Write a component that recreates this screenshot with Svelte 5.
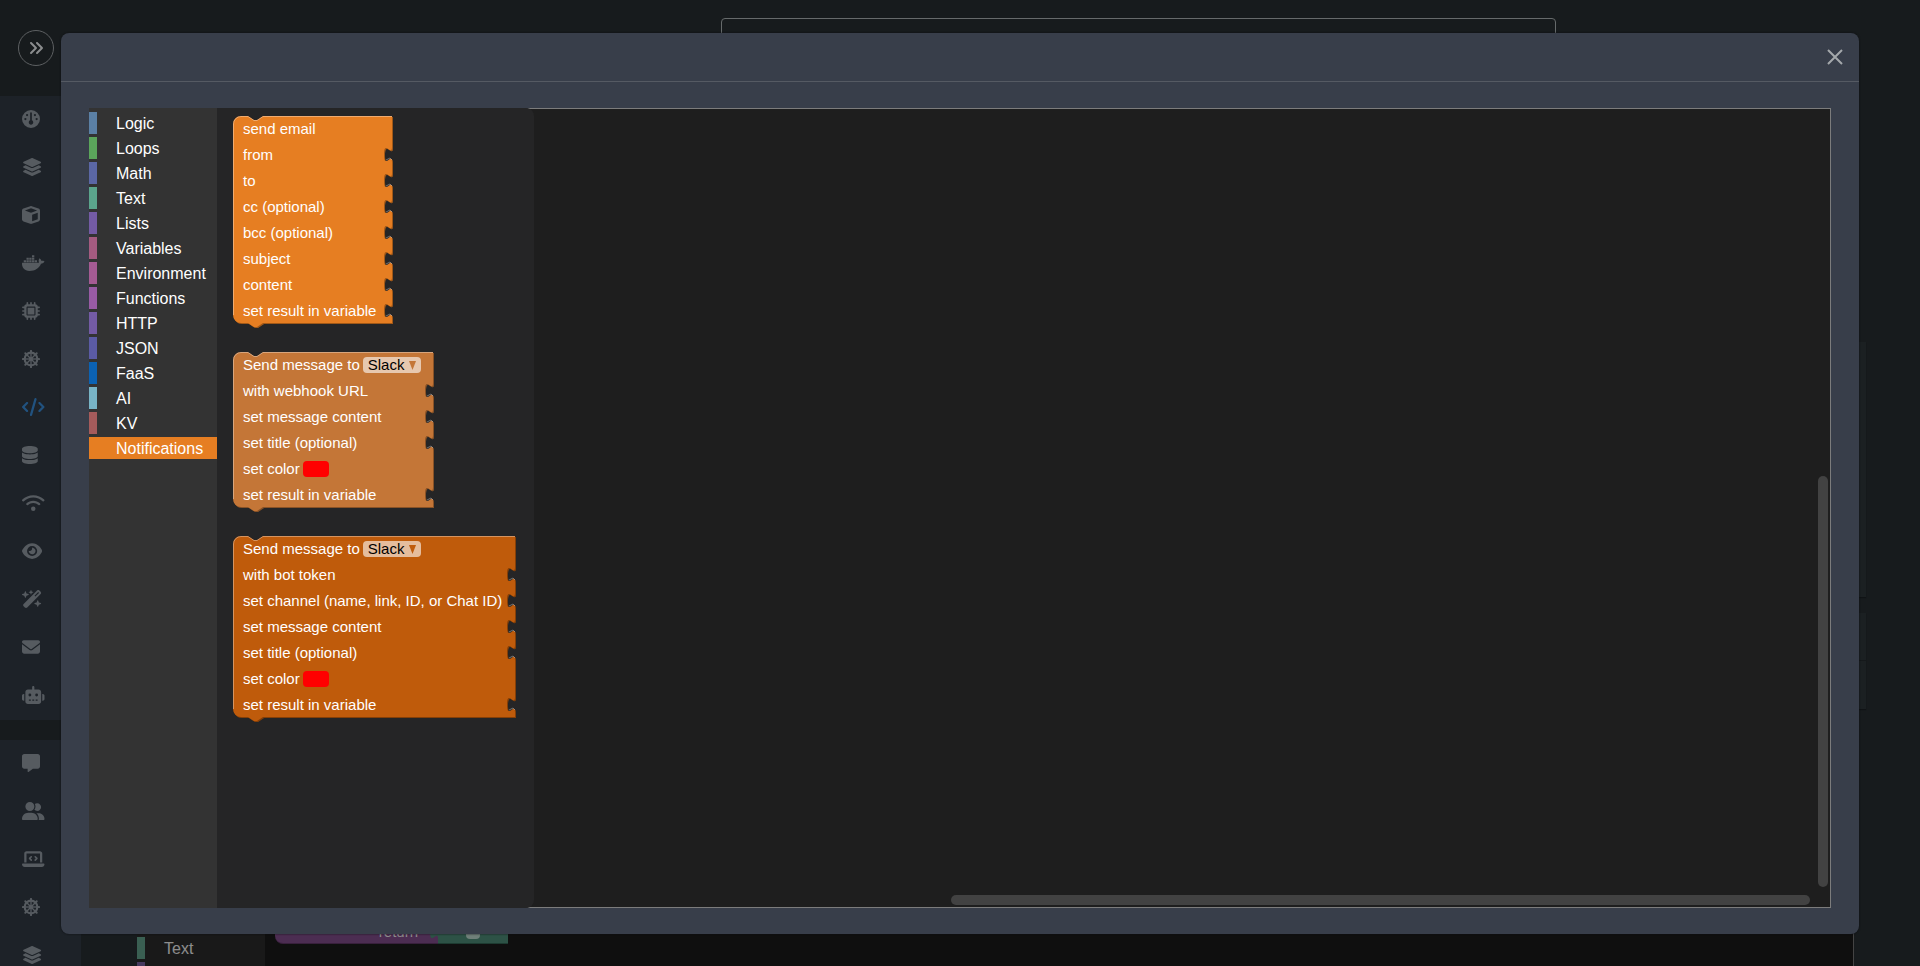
<script>
    let selected = 'Notifications'

    const icons = {
      expand: { w: 512, d: 'M470.6 278.6c12.5-12.5 12.5-32.8 0-45.3l-160-160c-12.5-12.5-32.8-12.5-45.3 0s-12.5 32.8 0 45.3L402.7 256 265.4 393.4c-12.5 12.5-12.5 32.8 0 45.3s32.8 12.5 45.3 0l160-160zm-352 160l160-160c12.5-12.5 12.5-32.8 0-45.3l-160-160c-12.5-12.5-32.8-12.5-45.3 0s-12.5 32.8 0 45.3L210.7 256 73.4 393.4c-12.5 12.5-12.5 32.8 0 45.3s32.8 12.5 45.3 0z' },
      gauge: { w: 512, d: 'M0 256a256 256 0 1 1 512 0A256 256 0 1 1 0 256zm320 96c0-26.9-16.5-49.9-40-59.3V88c0-13.3-10.7-24-24-24s-24 10.7-24 24V292.7c-23.5 9.5-40 32.5-40 59.3c0 35.3 28.7 64 64 64s64-28.7 64-64zM144 176a32 32 0 1 0 0-64 32 32 0 1 0 0 64zm-16 80a32 32 0 1 0 -64 0 32 32 0 1 0 64 0zm288 32a32 32 0 1 0 0-64 32 32 0 1 0 0 64zM400 144a32 32 0 1 0 -64 0 32 32 0 1 0 64 0z' },
      layers: { w: 576, d: 'M264.5 5.2c14.9-6.9 32.1-6.9 47 0l218.6 101c8.5 3.9 13.9 12.4 13.9 21.8s-5.4 17.9-13.9 21.8l-218.6 101c-14.9 6.9-32.1 6.9-47 0L45.9 149.8C37.4 145.8 32 137.3 32 128s5.4-17.9 13.9-21.8L264.5 5.2zM476.9 209.6l53.2 24.6c8.5 3.9 13.9 12.4 13.9 21.8s-5.4 17.9-13.9 21.8l-218.6 101c-14.9 6.9-32.1 6.9-47 0L45.9 277.8C37.4 273.8 32 265.3 32 256s5.4-17.9 13.9-21.8l53.2-24.6 152 70.2c23.4 10.8 50.4 10.8 73.8 0l152-70.2zm-152 198.2l152-70.2 53.2 24.6c8.5 3.9 13.9 12.4 13.9 21.8s-5.4 17.9-13.9 21.8l-218.6 101c-14.9 6.9-32.1 6.9-47 0L45.9 405.8C37.4 401.8 32 393.3 32 384s5.4-17.9 13.9-21.8l53.2-24.6 152 70.2c23.4 10.8 50.4 10.8 73.8 0z' },
      cube: { w: 512, d: 'M234.5 5.7c13.9-5 29.1-5 43.1 0l192 68.6C495 83.4 512 107.5 512 134.6V377.4c0 27-17 51.2-42.5 60.3l-192 68.6c-13.9 5-29.1 5-43.1 0l-192-68.6C17 428.6 0 404.5 0 377.4V134.6c0-27 17-51.2 42.5-60.3l192-68.6zM256 66L82.3 128 256 190l173.7-62L256 66zm32 368.6l160-57.1v-188L288 246.6v188z' },
      docker: { w: 640, d: 'M349.9 236.3h-66.1v-59.4h66.1v59.4zm0-204.3h-66.1v60.7h66.1V32zm78.2 144.8H362v59.4h66.1v-59.4zm-156.3-72.1h-66.1v60.1h66.1v-60.1zm78.1 0h-66.1v60.1h66.1v-60.1zm276.8 100c-14.4-9.7-47.6-13.2-73.1-8.4-3.3-24-16.7-44.9-41.1-63.7l-14-9.3-9.3 14c-18.4 27.8-23.4 73.6-3.7 103.8-8.7 4.7-25.8 11.1-48.4 10.7H2.4c-8.7 50.8 5.8 116.8 44 162.1 37.1 43.9 92.7 66.2 165.4 66.2 157.4 0 273.9-72.5 328.4-204.2 21.4 .4 67.6 .1 91.3-45.2 1.5-2.5 6.6-13.2 8.5-17.1l-13.3-8.9zm-511.1-27.9h-66v59.4h66.1v-59.4zm78.1 0h-66.1v59.4h66.1v-59.4zm78.1 0h-66.1v59.4h66.1v-59.4zm-78.1-72.1h-66.1v60.1h66.1v-60.1z' },
      chip: { w: 512, d: 'M176 24c0-13.3-10.7-24-24-24s-24 10.7-24 24V64c-35.3 0-64 28.7-64 64H24c-13.3 0-24 10.7-24 24s10.7 24 24 24H64v56H24c-13.3 0-24 10.7-24 24s10.7 24 24 24H64v56H24c-13.3 0-24 10.7-24 24s10.7 24 24 24H64c0 35.3 28.7 64 64 64v40c0 13.3 10.7 24 24 24s24-10.7 24-24V448h56v40c0 13.3 10.7 24 24 24s24-10.7 24-24V448h56v40c0 13.3 10.7 24 24 24s24-10.7 24-24V448c35.3 0 64-28.7 64-64h40c13.3 0 24-10.7 24-24s-10.7-24-24-24H448V280h40c13.3 0 24-10.7 24-24s-10.7-24-24-24H448V176h40c13.3 0 24-10.7 24-24s-10.7-24-24-24H448c0-35.3-28.7-64-64-64V24c0-13.3-10.7-24-24-24s-24 10.7-24 24V64H280V24c0-13.3-10.7-24-24-24s-24 10.7-24 24V64H176V24zM160 128H352c17.7 0 32 14.3 32 32V352c0 17.7-14.3 32-32 32H160c-17.7 0-32-14.3-32-32V160c0-17.7 14.3-32 32-32zm192 32H160V352H352V160z' },
      wheel: { w: 512, wheel: true },
      code: { w: 640, d: 'M392.8 1.2c-17-4.9-34.7 5-39.6 22l-128 448c-4.9 17 5 34.7 22 39.6s34.7-5 39.6-22l128-448c4.9-17-5-34.7-22-39.6zm80.6 120.1c-12.5 12.5-12.5 32.8 0 45.3L562.7 256l-89.4 89.4c-12.5 12.5-12.5 32.8 0 45.3s32.8 12.5 45.3 0l112-112c12.5-12.5 12.5-32.8 0-45.3l-112-112c-12.5-12.5-32.8-12.5-45.3 0zm-306.7 0c-12.5-12.5-32.8-12.5-45.3 0l-112 112c-12.5 12.5-12.5 32.8 0 45.3l112 112c12.5 12.5 32.8 12.5 45.3 0s12.5-32.8 0-45.3L77.3 256l89.4-89.4c12.5-12.5 12.5-32.8 0-45.3z' },
      database: { w: 448, d: 'M448 80v48c0 44.2-100.3 80-224 80S0 172.2 0 128V80C0 35.8 100.3 0 224 0S448 35.8 448 80zM393.2 214.7c20.8-7.4 39.9-16.9 54.8-28.6V288c0 44.2-100.3 80-224 80S0 332.2 0 288V186.1c14.9 11.8 34 21.2 54.8 28.6C99.7 230.7 159.5 240 224 240s124.3-9.3 169.2-25.3zM0 346.1c14.9 11.8 34 21.2 54.8 28.6C99.7 390.7 159.5 400 224 400s124.3-9.3 169.2-25.3c20.8-7.4 39.9-16.9 54.8-28.6V432c0 44.2-100.3 80-224 80S0 476.2 0 432V346.1z' },
      wifi: { w: 640, d: 'M54.2 202.9C123.2 136.7 216.8 96 320 96s196.8 40.7 265.8 106.9c12.8 12.2 33 11.8 45.2-.9s11.8-33-.9-45.2C549.7 79.5 440.4 32 320 32S90.3 79.5 9.8 156.7C-2.9 169-3.3 189.2 8.9 202s32.5 13.2 45.2 .9zM320 256c56.8 0 108.6 21.1 148.2 56c13.3 11.7 33.5 10.4 45.2-2.8s10.4-33.5-2.8-45.2C459.8 219.2 393 192 320 192s-139.8 27.2-190.5 72c-13.3 11.7-14.5 31.9-2.8 45.2s31.9 14.5 45.2 2.8c39.5-34.9 91.3-56 148.2-56zm64 160a64 64 0 1 0 -128 0 64 64 0 1 0 128 0z' },
      eye: { w: 576, d: 'M288 32c-80.8 0-145.5 36.8-192.6 80.6C48.6 156 17.3 208 2.5 243.7c-3.3 7.9-3.3 16.7 0 24.6C17.3 304 48.6 356 95.4 399.4C142.5 443.2 207.2 480 288 480s145.5-36.8 192.6-80.6c46.8-43.5 78.1-95.4 93-131.1c3.3-7.9 3.3-16.7 0-24.6c-14.9-35.7-46.2-87.7-93-131.1C433.5 68.8 368.8 32 288 32zM144 256a144 144 0 1 1 288 0 144 144 0 1 1 -288 0zm144-64c0 35.3-28.7 64-64 64c-7.1 0-13.9-1.2-20.3-3.3c-5.5-1.8-11.9 1.6-11.7 7.4c.3 6.9 1.3 13.8 3.2 20.7c13.7 51.2 66.4 81.6 117.6 67.9s81.6-66.4 67.9-117.6c-11.1-41.5-47.8-69.4-88.6-71.1c-5.8-.2-9.2 6.1-7.4 11.7c2.1 6.4 3.3 13.2 3.3 20.3z' },
      wand: { w: 576, d: 'M234.7 42.7L197 56.8c-3 1.1-5 4-5 7.2s2 6.1 5 7.2l37.7 14.1L248.8 123c1.1 3 4 5 7.2 5s6.1-2 7.2-5l14.1-37.7L315 71.2c3-1.1 5-4 5-7.2s-2-6.1-5-7.2L277.3 42.7 263.2 5c-1.1-3-4-5-7.2-5s-6.1 2-7.2 5L234.7 42.7zM46.1 395.4c-18.7 18.7-18.7 49.1 0 67.9l34.6 34.6c18.7 18.7 49.1 18.7 67.9 0L529.9 116.5c18.7-18.7 18.7-49.1 0-67.9L495.3 14.1c-18.7-18.7-49.1-18.7-67.9 0L46.1 395.4zM484.6 82.6l-105 105-23.3-23.3 105-105 23.3 23.3zM7.5 117.2C3 118.9 0 123.2 0 128s3 9.1 7.5 10.8L64 160l21.2 56.5c1.7 4.5 6 7.5 10.8 7.5s9.1-3 10.8-7.5L128 160l56.5-21.2c4.5-1.7 7.5-6 7.5-10.8s-3-9.1-7.5-10.8L128 96 106.8 39.5C105.1 35 100.8 32 96 32s-9.1 3-10.8 7.5L64 96 7.5 117.2zm352 256c-4.5 1.7-7.5 6-7.5 10.8s3 9.1 7.5 10.8L416 416l21.2 56.5c1.7 4.5 6 7.5 10.8 7.5s9.1-3 10.8-7.5L480 416l56.5-21.2c4.5-1.7 7.5-6 7.5-10.8s-3-9.1-7.5-10.8L480 352l-21.2-56.5c-1.7-4.5-6-7.5-10.8-7.5s-9.1 3-10.8 7.5L416 352l-56.5 21.2z' },
      envelope: { w: 512, d: 'M48 64C21.5 64 0 85.5 0 112c0 15.1 7.1 29.3 19.2 38.4L236.8 313.6c11.4 8.5 27 8.5 38.4 0L492.8 150.4c12.1-9.1 19.2-23.3 19.2-38.4c0-26.5-21.5-48-48-48H48zM0 176V384c0 35.3 28.7 64 64 64H448c35.3 0 64-28.7 64-64V176L294.4 339.2c-22.8 17.1-54 17.1-76.8 0L0 176z' },
      robot: { w: 640, d: 'M320 0c17.7 0 32 14.3 32 32V96H472c39.8 0 72 32.2 72 72V440c0 39.8-32.2 72-72 72H168c-39.8 0-72-32.2-72-72V168c0-39.8 32.2-72 72-72H288V32c0-17.7 14.3-32 32-32zM208 384c-8.8 0-16 7.2-16 16s7.2 16 16 16h32c8.8 0 16-7.2 16-16s-7.2-16-16-16H208zm96 0c-8.8 0-16 7.2-16 16s7.2 16 16 16h32c8.8 0 16-7.2 16-16s-7.2-16-16-16H304zm96 0c-8.8 0-16 7.2-16 16s7.2 16 16 16h32c8.8 0 16-7.2 16-16s-7.2-16-16-16H400zM264 256a40 40 0 1 0 -80 0 40 40 0 1 0 80 0zm152 40a40 40 0 1 0 0-80 40 40 0 1 0 0 80zM48 224H64V416H48c-26.5 0-48-21.5-48-48V272c0-26.5 21.5-48 48-48zm544 0c26.5 0 48 21.5 48 48v96c0 26.5-21.5 48-48 48H576V224h16z' },
      message: { w: 512, d: 'M64 0C28.7 0 0 28.7 0 64V352c0 35.3 28.7 64 64 64h96v80c0 6.1 3.4 11.6 8.8 14.3s11.9 2.1 16.8-1.5L309.3 416H448c35.3 0 64-28.7 64-64V64c0-35.3-28.7-64-64-64H64z' },
      users: { w: 640, d: 'M96 128a128 128 0 1 1 256 0A128 128 0 1 1 96 128zM0 482.3C0 383.8 79.8 304 178.3 304h91.4C368.2 304 448 383.8 448 482.3c0 16.4-13.3 29.7-29.7 29.7H29.7C13.3 512 0 498.7 0 482.3zM609.3 512H471.4c5.4-9.4 8.6-20.3 8.6-32v-8c0-60.7-27.1-115.2-69.8-151.8c2.4-.1 4.7-.2 7.1-.2h61.4C567.8 320 640 392.2 640 481.3c0 17-13.8 30.7-30.7 30.7zM432 256c-31 0-59-12.6-79.3-32.9C372.4 196.5 384 163.6 384 128c0-26.8-6.6-52.1-18.3-74.3C384.3 40.1 407.2 32 432 32c61.9 0 112 50.1 112 112s-50.1 112-112 112z' },
      laptop: { w: 640, d: 'M64 96c0-35.3 28.7-64 64-64H512c35.3 0 64 28.7 64 64V352H512V96H128V352H64V96zM0 403.2C0 392.6 8.6 384 19.2 384H620.8c10.6 0 19.2 8.6 19.2 19.2c0 42.4-34.4 76.8-76.8 76.8H76.8C34.4 480 0 445.6 0 403.2zM281 209l-31 31 31 31c9.4 9.4 9.4 24.6 0 33.9s-24.6 9.4-33.9 0l-48-48c-9.4-9.4-9.4-24.6 0-33.9l48-48c9.4-9.4 24.6-9.4 33.9 0s9.4 24.6 0 33.9zM393 175l48 48c9.4 9.4 9.4 24.6 0 33.9l-48 48c-9.4 9.4-24.6 9.4-33.9 0s-9.4-24.6 0-33.9l31-31-31-31c-9.4-9.4-9.4-24.6 0-33.9s24.6-9.4 33.9 0z' }
    }

    const menu = [
      ['gauge', 'layers', 'cube', 'docker', 'chip', 'wheel', 'code', 'database', 'wifi', 'eye', 'wand', 'envelope', 'robot'],
      ['message', 'users', 'laptop', 'wheel', 'layers']
    ]

    const categories = [
      { name: 'Logic', color: '#5b80a5' },
      { name: 'Loops', color: '#5ba55b' },
      { name: 'Math', color: '#5b67a5' },
      { name: 'Text', color: '#5ba58c' },
      { name: 'Lists', color: '#745ba5' },
      { name: 'Variables', color: '#a55b80' },
      { name: 'Environment', color: '#a55b93' },
      { name: 'Functions', color: '#995ba5' },
      { name: 'HTTP', color: '#745ba5' },
      { name: 'JSON', color: '#5b5ba5' },
      { name: 'FaaS', color: '#0b62b3' },
      { name: 'AI', color: '#78b4c6' },
      { name: 'KV', color: '#a55b5b' },
      { name: 'Notifications', color: '#e67e22' }
    ]

    const blocks = [
      {
        color: '#e67e22',
        width: 159,
        rows: [
          { label: 'send email' },
          { label: 'from', input: true },
          { label: 'to', input: true },
          { label: 'cc (optional)', input: true },
          { label: 'bcc (optional)', input: true },
          { label: 'subject', input: true },
          { label: 'content', input: true },
          { label: 'set result in variable', input: true }
        ]
      },
      {
        color: '#c47637',
        width: 200,
        rows: [
          { label: 'Send message to', field: 'select' },
          { label: 'with webhook URL', input: true },
          { label: 'set message content', input: true },
          { label: 'set title (optional)', input: true },
          { label: 'set color', field: 'color' },
          { label: 'set result in variable', input: true }
        ]
      },
      {
        color: '#bf5b0b',
        width: 282,
        rows: [
          { label: 'Send message to', field: 'select' },
          { label: 'with bot token', input: true },
          { label: 'set channel (name, link, ID, or Chat ID)', input: true },
          { label: 'set message content', input: true },
          { label: 'set title (optional)', input: true },
          { label: 'set color', field: 'color' },
          { label: 'set result in variable', input: true }
        ]
      }
    ]

    const ROW = 26
    const TAB = 'c0,10 -8,-8 -8,7.5 s8,-2.5 8,7.5'

    const height = (block) => block.rows.length * ROW - 1

    function outline (block) {
      const tabs = block.rows.map((row, i) => row.input ? `V${i * ROW + 5} ${TAB}` : '').join(' ')
      return `M0,8 A8,8 0 0,1 8,0 H15 l6,4 3,0 6,-4 H${block.width} ${tabs} V${height(block)} H30 l-6,4 -3,0 -6,-4 H8 a8,8 0 0,1 -8,-8 z`
    }

    function highlight (block) {
      const tabs = block.rows
        .map((row, i) => row.input ? `M${block.width - 6},${i * ROW + 18} l4,-2 l2,2` : '')
        .join(' ')
      return `M0.5,${height(block) - 8} V8 A7.5,7.5 0 0,1 8,0.5 H15 l6,4 3,0 6,-4 H${block.width} ${tabs}`
    }
</script>

{#snippet icon(name)}
    <svg class="icon" viewBox="0 0 {icons[name].w} 512" aria-hidden="true">
        {#if icons[name].wheel}
            <circle cx="256" cy="256" r="180" fill="none" stroke="currentColor" stroke-width="60" />
            <circle cx="256" cy="256" r="56" />
            {#each [0, 45, 90, 135] as angle}
                <path
                    d="M256 48V464"
                    transform="rotate({angle} 256 256)"
                    stroke="currentColor"
                    stroke-width="38"
                />
                <path
                    d="M256 28V42M256 470V484"
                    transform="rotate({angle} 256 256)"
                    stroke="currentColor"
                    stroke-width="60"
                    stroke-linecap="round"
                />
            {/each}
        {:else}
            <path d={icons[name].d} fill-rule="evenodd" />
        {/if}
    </svg>
{/snippet}

<div class="page">
    <aside class="sidebar">
        <div class="brand">
            <button class="expand" type="button" aria-label="Expand menu">{@render icon('expand')}</button>
        </div>
        {#each menu as group}
            <nav class="group">
                {#each group as name}
                    <a href="#{name}" class="item" class:active={name === 'code'} aria-label={name}>
                        {@render icon(name)}
                    </a>
                {/each}
            </nav>
        {/each}
    </aside>

    <main class="main">
        <input class="search" type="text" aria-label="Search">
        <div class="card tall"></div>
        <div class="card"><div class="line"></div></div>
        <div class="editor">
            <div class="tree small">
                <button class="category" type="button" style:border-color={categories[3].color}>Text</button>
                <button class="category" type="button" style:border-color={categories[4].color} aria-label="Lists"></button>
            </div>
            <div class="stack">
                <div class="return">return</div>
                <div class="value">
                    <svg class="tab" viewBox="0 0 8 15" aria-hidden="true">
                        <path d="M8,0 c0,10 -8,-8 -8,7.5 s8,-2.5 8,7.5 z" />
                    </svg>
                    <span class="pill"></span>
                </div>
            </div>
        </div>
    </main>
</div>

<div class="overlay">
    <div class="modal" role="dialog" aria-modal="true">
        <header class="header">
            <button class="close" type="button" aria-label="Close">
                <svg viewBox="0 0 16 16" aria-hidden="true">
                    <path d="M1 1L15 15M15 1L1 15" />
                </svg>
            </button>
        </header>
        <div class="body">
            <div class="tree">
                {#each categories as category}
                    <button
                        class="category"
                        type="button"
                        style:border-color={category.color}
                        style:background-color={category.name === selected ? category.color : null}
                        on:click={() => { selected = category.name }}
                    >{category.name}</button>
                {/each}
            </div>
            <div class="flyout">
                {#each blocks as block, b}
                    <div class="block" style:width="{block.width}px">
                        <svg class="shape" width={block.width + 1} height={height(block) + 6} aria-hidden="true">
                            <path d={outline(block)} transform="translate(1 1)" fill={block.color} />
                            <path d={outline(block)} transform="translate(1 1)" fill="#000" fill-opacity="0.3" />
                            <path d={outline(block)} fill={block.color} />
                            <path d={highlight(block)} fill="none" stroke="#fff" stroke-opacity="0.35" />
                        </svg>
                        {#each block.rows as row}
                            <div class="row">
                                {#if row.field === 'select'}
                                    <label for="target-{b}">{row.label}</label>
                                    <span class="dropdown">
                                        <select id="target-{b}">
                                            <option>Slack</option>
                                            <option>Discord</option>
                                        </select>
                                        <svg class="arrow" viewBox="0 0 7 9" fill={block.color} aria-hidden="true">
                                            <path d="M0 0H7L3.5 9z" />
                                        </svg>
                                    </span>
                                {:else if row.field === 'color'}
                                    <label for="color-{b}">{row.label}</label>
                                    <input id="color-{b}" class="swatch" type="color" value="#ff0000">
                                {:else}
                                    <span>{row.label}</span>
                                {/if}
                            </div>
                        {/each}
                    </div>
                {/each}
            </div>
            <div class="canvas">
                <div class="bar vertical"></div>
                <div class="bar horizontal"></div>
            </div>
        </div>
    </div>
</div>

<style>
    :global(body) {
        background-color: #171b1d;
        font-family: "Liberation Sans", Arial, sans-serif;
    }

    button,
    select,
    input {
        margin: 0;
        padding: 0;
        border: 0;
        background: none;
        font: inherit;
        color: inherit;
    }

    .page {
        display: flex;
        height: 100vh;
        overflow: hidden;
    }

    .sidebar {
        flex: none;
        width: 81px;
    }

    .brand {
        box-sizing: border-box;
        height: 96px;
        padding: 30px 18px;
    }

    .expand {
        display: flex;
        align-items: center;
        justify-content: center;
        box-sizing: border-box;
        width: 36px;
        height: 36px;
        border: 1px solid #5d6062;
        border-radius: 50%;
        color: #8b8d8e;
    }

    .expand .icon {
        height: 16px;
    }

    .group {
        margin-bottom: 20px;
        background-color: #1d2228;
    }

    .item {
        display: flex;
        align-items: center;
        box-sizing: border-box;
        height: 48px;
        padding: 0 0 2px 22px;
        color: #565b60;
    }

    .item.active {
        color: #21527f;
    }

    .icon {
        display: block;
        height: 18px;
        fill: currentColor;
    }

    .main {
        flex: 1;
        display: flex;
        flex-direction: column;
        padding: 18px 54px 0 56px;
    }

    .search {
        flex: none;
        align-self: flex-end;
        box-sizing: border-box;
        width: 835px;
        height: 40px;
        margin: 0 310px 284px 0;
        border: 1px solid #666a6b;
        border-radius: 4px;
    }

    .card {
        flex: none;
        height: 96px;
        margin-bottom: 16px;
        background-color: #1b2022;
        box-shadow: 0 1px 1px #101315;
    }

    .card.tall {
        height: 255px;
    }

    .line {
        height: 47px;
        border-bottom: 1px solid #15191b;
    }

    .editor {
        flex: 1;
        display: flex;
        align-items: flex-end;
        min-height: 0;
        margin-right: 12px;
        overflow: hidden;
        border-right: 1px solid #444;
        background-color: #0f0f0f;
    }

    .stack {
        display: flex;
        align-self: flex-end;
        padding: 0 0 22px 10px;
        font-size: 15px;
        line-height: 20px;
        color: #8c8c8c;
    }

    .return {
        box-sizing: border-box;
        width: 163px;
        height: 48px;
        padding: 26px 20px 0 0;
        border-bottom: 1px solid #38203c;
        border-radius: 8px 0 0 8px;
        background-color: #4c2d52;
        text-align: right;
    }

    .value {
        position: relative;
        display: flex;
        align-items: flex-end;
        justify-content: center;
        box-sizing: border-box;
        width: 70px;
        height: 48px;
        padding-bottom: 4px;
        border-bottom: 1px solid #1d3b31;
        background-color: #2d5246;
    }

    .tab {
        position: absolute;
        right: 100%;
        bottom: 4px;
        width: 8px;
        height: 15px;
        fill: #2d5246;
    }

    .pill {
        width: 14px;
        height: 16px;
        border-radius: 4px;
        background-color: #6f7f79;
    }

    .overlay {
        position: fixed;
        inset: 0;
        display: flex;
        padding: 33px 61px 32px;
    }

    .modal {
        flex: 1;
        display: flex;
        flex-direction: column;
        border-radius: 8px;
        background-color: #383e4a;
        box-shadow: 0 0 2px #0c0e10;
    }

    .header {
        display: flex;
        align-items: center;
        justify-content: flex-end;
        height: 48px;
        padding: 0 16px;
        border-bottom: 1px solid #555a63;
    }

    .close {
        width: 16px;
        height: 16px;
        cursor: pointer;
    }

    .close svg {
        display: block;
        fill: none;
        stroke: #a4a8ab;
        stroke-width: 2;
    }

    .body {
        flex: 1;
        display: flex;
        min-height: 0;
        padding: 26px 28px;
    }

    .tree {
        flex: none;
        box-sizing: border-box;
        width: 128px;
        padding-top: 4px;
        background-color: #333;
        color: #fff;
    }

    .tree.small {
        height: 33px;
        background-color: #191919;
        overflow: hidden;
    }

    .small .category {
        opacity: 0.5;
    }

    .category {
        display: block;
        width: 100%;
        height: 22px;
        margin-bottom: 3px;
        padding-left: 19px;
        border-left: 8px solid;
        font-size: 16px;
        line-height: 24px;
        text-align: left;
        white-space: nowrap;
        cursor: pointer;
    }

    .flyout {
        z-index: 1;
        flex: none;
        display: flex;
        flex-direction: column;
        gap: 28px;
        box-sizing: border-box;
        width: 317px;
        padding: 8px 16px;
        border-radius: 0 8px 8px 0;
        background-color: #252526;
    }

    .block {
        position: relative;
        font-size: 15px;
        line-height: 26px;
        color: #fff;
    }

    /* the puzzle outline lies under the rows */
    .shape {
        position: absolute;
        top: 0;
        left: 0;
    }

    .row {
        position: relative;
        display: flex;
        align-items: center;
        gap: 3px;
        height: 26px;
        padding-left: 10px;
        white-space: nowrap;
    }

    .dropdown {
        display: flex;
        align-items: center;
        position: relative;
    }

    select {
        appearance: none;
        width: 58px;
        height: 16px;
        padding-left: 5px;
        border-radius: 4px;
        background-color: rgba(255, 255, 255, 0.6);
        line-height: 16px;
        color: #000;
    }

    .arrow {
        position: absolute;
        right: 5px;
        width: 7px;
        height: 9px;
        pointer-events: none;
    }

    .swatch {
        appearance: none;
        width: 26px;
        height: 16px;
        overflow: hidden;
        border-radius: 4px;
    }

    .swatch::-webkit-color-swatch-wrapper {
        padding: 0;
    }

    .swatch::-webkit-color-swatch {
        border: 0;
    }

    .canvas {
        flex: 1;
        position: relative;
        margin-left: -6px;
        border: 1px solid #7c7c7c;
        background-color: #1e1e1e;
    }

    .bar {
        position: absolute;
        border-radius: 5px;
        background-color: #424242;
    }

    .vertical {
        top: 46%;
        right: 2px;
        bottom: 20px;
        width: 10px;
    }

    .horizontal {
        right: 20px;
        bottom: 2px;
        width: 66%;
        height: 10px;
    }
</style>
